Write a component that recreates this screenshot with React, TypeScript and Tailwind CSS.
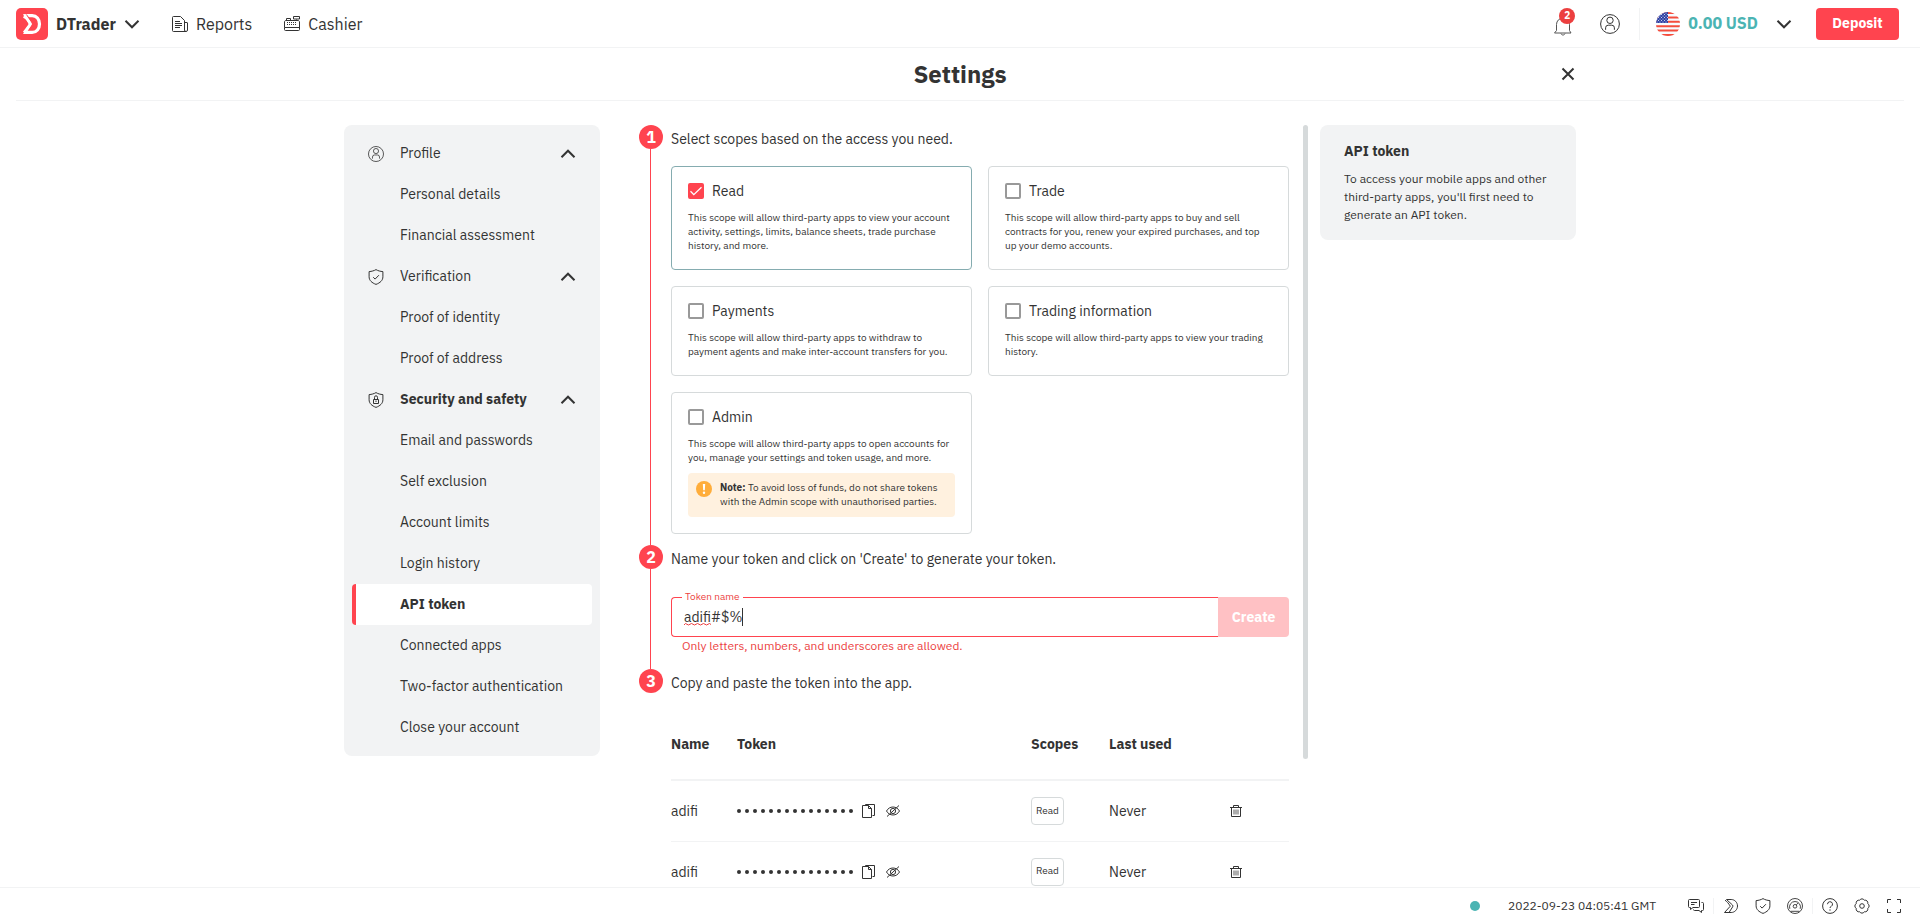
import { useState } from "react";
import type { ReactNode } from "react";

type IconProps = { className?: string };

function Icon({ className = "size-4", box = 16, width = 1, children }: IconProps & { box?: number; width?: number; children: ReactNode }) {
  return (
    <svg
      className={className}
      viewBox={`0 0 ${box} ${box}`}
      fill="none"
      stroke="currentColor"
      strokeWidth={width}
      aria-hidden="true"
    >
      {children}
    </svg>
  );
}

const Chevron = ({ className }: IconProps) => (
  <Icon className={className} width={2}>
    <path d="M1.500 4.800 8 11.300 14.500 4.800" />
  </Icon>
);

const Logo = () => (
  <svg className="size-8" viewBox="0 0 32 32" aria-hidden="true">
    <rect width="32" height="32" rx="5" fill="#ff444f" />
    <g fill="none" stroke="#fff">
      <path d="M10 7.600h6.200c4.300 0 7.300 3.600 7.300 8.400s-3 8.400-7.300 8.400H8" strokeWidth="3.200" />
      <path d="M7.600 8.500c3 1.300 5 3.600 6.800 7.500L8 24.600" strokeWidth="2.600" />
    </g>
    <path d="M10.200 6.600 15.800 14.200" stroke="#ff444f" strokeWidth="1.200" />
    <path d="M7 6.200 9.600 6l5.600 8.600c.6 1 .6 1.800 0 2.800L9.600 26H7l5.800-9.800Z" fill="#fff" />
  </svg>
);

const ReportsIcon = () => (
  <Icon>
    <path d="M12.500 14v-9.500l-4-4H1.500a1 1 0 0 0-1 1v13a1 1 0 0 0 1 1h12.500a1.500 1.500 0 0 0 1.500-1.500V7a.5.5 0 0 0-.5-.5h-2.500M12.500 14a1.500 1.500 0 0 0 1.500 1.500" />
    <path d="M3 5.500h5M3 7.500h7M3 9.500h7M3 11.500h5" />
  </Icon>
);

const CashierIcon = () => (
  <Icon>
    <path d="M.5 11.500V6c0-.9.600-1.500 1.500-1.500h12c.9 0 1.500.6 1.500 1.500v7.500a1 1 0 0 1-1 1h-13a1 1 0 0 1-1-1v-2h15M2.500 4.500v-2h4v2M12.500 4.500v-1M9.500.5h6v2.500h-6Z" />
    <path d="M3 6.500h10M3 8.500h10" strokeDasharray="1 1" />
  </Icon>
);

const BellIcon = () => (
  <Icon className="size-5" box={20}>
    <path d="M3.500 14.500V8.500a6.500 6.500 0 0 1 13 0v6l1.500 2.500H1.500Z" />
    <path d="M8 17.500c.3 1 1 1.500 2 1.500s1.700-.5 2-1.500" />
  </Icon>
);

const UserIcon = ({ className }: IconProps) => (
  <Icon className={className} box={20}>
    <circle cx="10" cy="10" r="9.400" />
    <circle cx="10" cy="6.300" r="3.200" />
    <path d="M5.600 15.800v-2a2.600 2.600 0 0 1 2.600-2.600h3.600a2.600 2.600 0 0 1 2.600 2.600v2" />
  </Icon>
);

const shield = "M8 .6c2 1.200 4.300 1.800 6.900 2v5.200c0 3.600-2.700 6-6.900 7.600-4.200-1.600-6.900-4-6.900-7.600V2.600C3.700 2.400 6 1.800 8 .6Z";

const ShieldCheck = () => (
  <Icon>
    <path d={shield} />
    <path d="m5.200 8.200 1.900 1.900 3.800-3.900" />
  </Icon>
);

const ShieldLock = () => (
  <Icon>
    <path d={shield} />
    <path d="M5.500 7.500h5v4h-5ZM6.500 7.500V5.300a1.500 1.500 0 0 1 3 0v2.200M8 8.500V10" />
  </Icon>
);

const FlagIcon = () => (
  <svg className="size-6" viewBox="0 0 24 24" aria-hidden="true">
    <defs>
      <clipPath id="flag-round">
        <circle cx="12" cy="12" r="12" />
      </clipPath>
      <pattern id="flag-stars" width="3" height="3" patternUnits="userSpaceOnUse">
        <rect width="3" height="3" fill="#2e42a5" />
        <circle cx="1" cy="1" r=".5" fill="#fff" />
        <circle cx="2.500" cy="2.500" r=".5" fill="#fff" />
      </pattern>
    </defs>
    <g clipPath="url(#flag-round)">
      <rect width="24" height="24" fill="#f7fcff" />
      <path d="M0 1h24M0 5.500h24M0 9.800h24M0 14.200h24M0 18.500h24M0 23h24" stroke="#f44d3d" strokeWidth="2" />
      <rect width="12" height="11" fill="url(#flag-stars)" />
    </g>
  </svg>
);

const CopyIcon = () => (
  <Icon>
    <path d="M4.500 2.500v-1h9v11h-2" />
    <path d="M1.500 2.500h6l3 3v9h-9ZM7.500 2.500v3h3" fill="#fff" />
  </Icon>
);

const EyeOffIcon = () => (
  <Icon>
    <path d="M1.500 8c1.500-2.600 3.700-4 6.500-4s5 1.400 6.500 4c-1.500 2.600-3.700 4-6.500 4S3 10.600 1.500 8Z" />
    <circle cx="8" cy="8" r="2.600" />
    <path d="M2 13.500 14 2.500" />
  </Icon>
);

const TrashIcon = () => (
  <Icon>
    <path d="M2 4.500h12M5.500 4V2.500h5V4M3.500 4.500v9h9v-9" />
    <path d="M6 6.500v5M8 6.500v5M10 6.500v5" strokeOpacity=".8" />
  </Icon>
);

const WarnIcon = () => (
  <svg className="size-4 shrink-0" viewBox="0 0 16 16" aria-hidden="true">
    <circle cx="8" cy="8" r="8" fill="#ffad3a" />
    <path d="M6.800 3h2.400l-.4 6.300H7.200Z" fill="#fff" />
    <circle cx="8" cy="11.800" r="1.200" fill="#fff" />
  </svg>
);

const ChatIcon = () => (
  <Icon>
    <path d="M1.500 1.500h9a1 1 0 0 1 1 1v6a1 1 0 0 1-1 1H5L2.500 11.500v-2h-1a1 1 0 0 1-1-1v-6a1 1 0 0 1 1-1ZM3 4.500h6M3 6.500h3.500" />
    <path d="M13.500 4.500h1a1 1 0 0 1 1 1v6a1 1 0 0 1-1 1h-1v2l-2.500-2H6.500a1 1 0 0 1-1-1" />
  </Icon>
);

const DerivIcon = () => (
  <Icon>
    <path d="M3.500 1.500h4.700c3.500 0 6.300 2.900 6.300 6.500s-2.800 6.500-6.300 6.500H1.500L7.300 8.200C5.500 5.400 4 3.500 2 2.200" />
    <path d="m3.500 1.500 6 5.500c.5.600.5 1.200.2 1.800L6 14.500" />
  </Icon>
);

const GaugeIcon = () => (
  <Icon width={0.9}>
    <circle cx="8" cy="8" r="7.500" />
    <path d="M2.800 10.800a5.500 5.500 0 1 1 10.400 0M9.300 6.900l1.900-2M3.500 13.300h9" />
    <circle cx="8" cy="8.300" r="1.800" />
  </Icon>
);

const HelpIcon = () => (
  <Icon>
    <circle cx="8" cy="8" r="7.400" />
    <path d="M5.500 6.200a2.500 2.500 0 1 1 3.700 2.200C8.400 8.800 8 9.200 8 10M8 11.300v1.400" />
  </Icon>
);

const GearIcon = () => (
  <Icon>
    <path d="M13.730 10.370a2.700 2.700 0 0 1-3.360 3.360 2.700 2.700 0 0 1-4.740 0 2.700 2.700 0 0 1-3.360-3.360 2.700 2.700 0 0 1 0-4.740 2.700 2.700 0 0 1 3.360-3.360 2.700 2.700 0 0 1 4.740 0 2.700 2.700 0 0 1 3.360 3.360 2.700 2.700 0 0 1 0 4.740Z" />
    <circle cx="8" cy="8" r="2.300" />
  </Icon>
);

const ExpandIcon = () => (
  <Icon>
    <path d="M1.500 5V1.500H5M11 1.500h3.500V5M14.500 11v3.500H11M5 14.500H1.500V11" />
  </Icon>
);

const menu: { title: string; icon: ReactNode; items: string[] }[] = [
  { title: "Profile", icon: <UserIcon className="size-4" />, items: ["Personal details", "Financial assessment"] },
  { title: "Verification", icon: <ShieldCheck />, items: ["Proof of identity", "Proof of address"] },
  {
    title: "Security and safety",
    icon: <ShieldLock />,
    items: [
      "Email and passwords",
      "Self exclusion",
      "Account limits",
      "Login history",
      "API token",
      "Connected apps",
      "Two-factor authentication",
      "Close your account",
    ],
  },
];

const scopes = [
  { name: "Read", text: "This scope will allow third-party apps to view your account activity, settings, limits, balance sheets, trade purchase history, and more." },
  { name: "Trade", text: "This scope will allow third-party apps to buy and sell contracts for you, renew your expired purchases, and top up your demo accounts." },
  { name: "Payments", text: "This scope will allow third-party apps to withdraw to payment agents and make inter-account transfers for you." },
  { name: "Trading information", text: "This scope will allow third-party apps to view your trading history." },
  { name: "Admin", text: "This scope will allow third-party apps to open accounts for you, manage your settings and token usage, and more.", note: true },
];

function Header() {
  return (
    <header className="flex h-12 shrink-0 items-center justify-between border-b border-[#f2f3f4] pr-[21px] pl-4">
      <div className="flex items-center">
        <button type="button" className="flex items-center">
          <Logo />
          <span className="ml-2 text-base font-bold">DTrader</span>
          <Chevron className="ml-2 size-4" />
        </button>
        <nav className="ml-8 flex items-center gap-8 text-base">
          <a href="#reports" className="flex items-center gap-2">
            <ReportsIcon />
            Reports
          </a>
          <a href="#cashier" className="flex items-center gap-2">
            <CashierIcon />
            Cashier
          </a>
        </nav>
      </div>
      <div className="flex items-center">
        <button type="button" aria-label="Notifications" className="relative mr-[27px] pt-1 text-[#555555]">
          <BellIcon />
          <span className="absolute -top-1 -right-0.5 flex size-4 items-center justify-center rounded-full bg-[#ec3f3f] text-[10px] font-bold text-white">
            2
          </span>
        </button>
        <button type="button" aria-label="Account" className="mr-[19px]">
          <UserIcon className="size-5" />
        </button>
        <button type="button" className="flex h-8 items-center border-l border-[#f2f3f4] pl-4 text-[#4bb4b3]">
          <FlagIcon />
          <span className="ml-2 pb-0.5 text-base font-bold">0.00 USD</span>
          <Chevron className="ml-[18px] size-4 text-[#333333]" />
        </button>
        <button type="button" className="ml-6 h-8 w-[83px] rounded bg-[#ff444f] pb-0.5 text-sm font-bold text-white">
          Deposit
        </button>
      </div>
    </header>
  );
}

function Sidebar() {
  return (
    <nav className="w-64 shrink-0 rounded-lg bg-[#f2f3f4] p-2 text-sm">
      {menu.map((group) => (
        <div key={group.title}>
          <button type="button" className="flex h-[41px] w-full items-center px-4 text-left">
            {group.icon}
            <span className={group.title === "Security and safety" ? "ml-4 flex-1 pb-px font-bold" : "ml-4 flex-1 pb-px"}>
              {group.title}
            </span>
            <Chevron className="size-4 rotate-180" />
          </button>
          {group.items.map((item) => (
            <a
              key={item}
              href="#settings"
              className={
                item === "API token"
                  ? "flex h-[41px] items-center rounded border-l-4 border-[#ff444f] bg-white pb-px pl-11 font-bold"
                  : "flex h-[41px] items-center pb-px pl-12"
              }
            >
              {item}
            </a>
          ))}
        </div>
      ))}
    </nav>
  );
}

function Step({ number, title, last, children }: { number: number; title: string; last?: boolean; children: ReactNode }) {
  return (
    <li className="flex gap-2">
      <div className="flex w-6 shrink-0 flex-col">
        <span className="flex size-6 shrink-0 items-center justify-center rounded-full bg-[#ff444f] text-base font-bold text-white">
          {number}
        </span>
        {!last && <span className="ml-[11px] w-px flex-1 bg-[#ff444f]" />}
      </div>
      <div className="min-w-0 flex-1">
        <h2 className="text-sm leading-7">{title}</h2>
        {children}
      </div>
    </li>
  );
}

function ScopeCard({ name, text, note, checked, onToggle }: { name: string; text: string; note?: boolean; checked: boolean; onToggle: () => void }) {
  return (
    <label className={checked ? "block rounded border border-[#85acb0] p-4" : "block rounded border border-[#d6dadb] p-4"}>
      <span className="flex h-4 items-center gap-2 text-sm">
        <span className="relative flex size-4">
          <input
            type="checkbox"
            checked={checked}
            onChange={onToggle}
            className="size-4 appearance-none rounded-xs border-2 border-[#999999] checked:border-[#ff444f] checked:bg-[#ff444f]"
          />
          {checked && (
            <svg className="pointer-events-none absolute inset-0 size-4" viewBox="0 0 16 16" fill="none" stroke="#fff" strokeWidth="1.300" aria-hidden="true">
              <path d="m2.500 8.300 3.300 3.300 7.700-7.300" />
            </svg>
          )}
        </span>
        {name}
      </span>
      <span className="mt-3 block text-[10px] leading-[14px]">{text}</span>
      {note && (
        <span className="mt-2 flex gap-2 rounded bg-[#fff1df] p-2 text-[10px] leading-[14px]">
          <WarnIcon />
          <span>
            <b>Note:</b> To avoid loss of funds, do not share tokens with the Admin scope with unauthorised parties.
          </span>
        </span>
      )}
    </label>
  );
}

function TokenForm() {
  const [value, setValue] = useState("adifi#$%");
  return (
    <form className="mt-6 pb-3.5" onSubmit={(e) => e.preventDefault()}>
      <div className="flex h-10">
        <div className="relative flex-1">
          <input
            id="token-name"
            value={value}
            onChange={(e) => setValue(e.target.value)}
            spellCheck={false}
            className="h-10 w-full rounded-l border border-r-0 border-[#ff444f] px-3 text-sm outline-none"
          />
          <label htmlFor="token-name" className="absolute -top-2 left-[11px] bg-white px-[3px] text-[10px] leading-4 text-[#ec3f3f]">
            Token name
          </label>
          <svg className="pointer-events-none absolute top-2.5 left-[13px] h-5 w-[60px]" viewBox="0 0 60 20" fill="none" aria-hidden="true">
            <path d="M0 18l1.500-1.500L4.500 18l3-1.500 3 1.500 3-1.500 3 1.500 3-1.500 3 1.500 3-1.500 1.500 1" stroke="#ec3f3f" />
            <path d="M58.500 1v18" stroke="#333333" />
          </svg>
        </div>
        <button type="submit" disabled className="w-[71px] rounded-r bg-[#ffc1c4] text-sm font-bold text-white">
          Create
        </button>
      </div>
      <p className="pl-[11px] text-xs leading-[18px] text-[#ec3f3f]">Only letters, numbers, and underscores are allowed.</p>
    </form>
  );
}

function TokenTable() {
  return (
    <table className="mt-3 w-full table-fixed text-left text-sm">
      <colgroup>
        <col className="w-[66px]" />
        <col />
        <col className="w-[78px]" />
        <col className="w-[119px]" />
        <col className="w-[61px]" />
      </colgroup>
      <thead>
        <tr className="h-[71px] border-b-2 border-[#f2f3f4]">
          <th>Name</th>
          <th>Token</th>
          <th>Scopes</th>
          <th>Last used</th>
          <th aria-label="Actions" />
        </tr>
      </thead>
      <tbody>
        {[0, 1].map((row) => (
          <tr key={row} className="h-[61px] border-b border-[#f2f3f4]">
            <td>adifi</td>
            <td>
              <div className="flex items-center">
                <div className="flex gap-1">
                  {Array.from({ length: 15 }, (_, i) => (
                    <span key={i} className="size-1 rounded-full bg-[#333333]" />
                  ))}
                </div>
                <button type="button" aria-label="Copy token" className="ml-2">
                  <CopyIcon />
                </button>
                <button type="button" aria-label="Show token" className="ml-2">
                  <EyeOffIcon />
                </button>
              </div>
            </td>
            <td>
              <span className="inline-flex h-7 items-center rounded border border-[#d6dadb] px-1 text-[10px]">Read</span>
            </td>
            <td>Never</td>
            <td>
              <button type="button" aria-label="Delete token" className="flex">
                <TrashIcon />
              </button>
            </td>
          </tr>
        ))}
      </tbody>
    </table>
  );
}

function Footer() {
  return (
    <footer className="flex h-9 shrink-0 items-center justify-end border-t border-[#f2f3f4] pr-[18px] text-xs">
      <span className="size-2.5 rounded-full bg-[#4bb4b3]" />
      <time className="ml-7">2022-09-23 04:05:41 GMT</time>
      <div className="ml-8 flex items-center">
        <a href="#chat" aria-label="Live chat"><ChatIcon /></a>
        <span className="mx-[9px] h-4 w-px bg-[#f2f3f4]" />
        <div className="flex items-center gap-4">
          <a href="#deriv" aria-label="Deriv"><DerivIcon /></a>
          <a href="#responsible" aria-label="Responsible trading"><ShieldCheck /></a>
          <a href="#limits" aria-label="Account limits"><GaugeIcon /></a>
        </div>
        <span className="mx-[9px] h-4 w-px bg-[#f2f3f4]" />
        <div className="flex items-center gap-4">
          <a href="#help" aria-label="Help centre"><HelpIcon /></a>
          <button type="button" aria-label="Platform settings"><GearIcon /></button>
          <button type="button" aria-label="Full screen"><ExpandIcon /></button>
        </div>
      </div>
    </footer>
  );
}

export default function App() {
  const [selected, setSelected] = useState<string[]>(["Read"]);
  const toggle = (name: string) =>
    setSelected((prev) => (prev.includes(name) ? prev.filter((n) => n !== name) : [...prev, name]));

  return (
    <div className="flex h-screen flex-col overflow-hidden bg-white font-['IBM_Plex_Sans',Roboto,sans-serif] text-[#333333]">
      <Header />
      <main className="flex min-h-0 flex-1 flex-col overflow-hidden">
        <div className="mx-4 shrink-0 border-b border-[#f2f3f4]">
          <div className="mx-auto grid h-[52px] max-w-[1232px] grid-cols-[1fr_auto_1fr] items-center">
            <h1 className="col-start-2 text-2xl font-bold">Settings</h1>
            <button type="button" aria-label="Close" className="justify-self-end">
              <Icon width={2}>
                <path d="m2.500 2.500 11 11M13.500 2.500l-11 11" />
              </Icon>
            </button>
          </div>
        </div>
        <div className="mx-auto mt-6 flex w-full max-w-[1232px] items-start">
          <Sidebar />
          <ol className="ml-[39px] min-w-0 flex-1">
            <Step number={1} title="Select scopes based on the access you need.">
              <div className="mt-[13px] grid grid-cols-2 gap-4 pb-[11px]">
                {scopes.map((s) => (
                  <ScopeCard key={s.name} {...s} checked={selected.includes(s.name)} onToggle={() => toggle(s.name)} />
                ))}
              </div>
            </Step>
            <Step number={2} title="Name your token and click on 'Create' to generate your token.">
              <TokenForm />
            </Step>
            <Step number={3} title="Copy and paste the token into the app." last>
              <TokenTable />
            </Step>
          </ol>
          <div className="ml-3.5 h-[634px] w-[5px] shrink-0 rounded-full bg-[#d6dadb]" />
          <aside className="ml-3 w-64 shrink-0 rounded-lg bg-[#f2f3f4] px-6 py-4">
            <h2 className="text-sm leading-[21px] font-bold">API token</h2>
            <p className="mt-2 text-xs leading-[18px]">
              To access your mobile apps and other third-party apps, you'll first need to generate an API token.
            </p>
          </aside>
        </div>
      </main>
      <Footer />
    </div>
  );
}
